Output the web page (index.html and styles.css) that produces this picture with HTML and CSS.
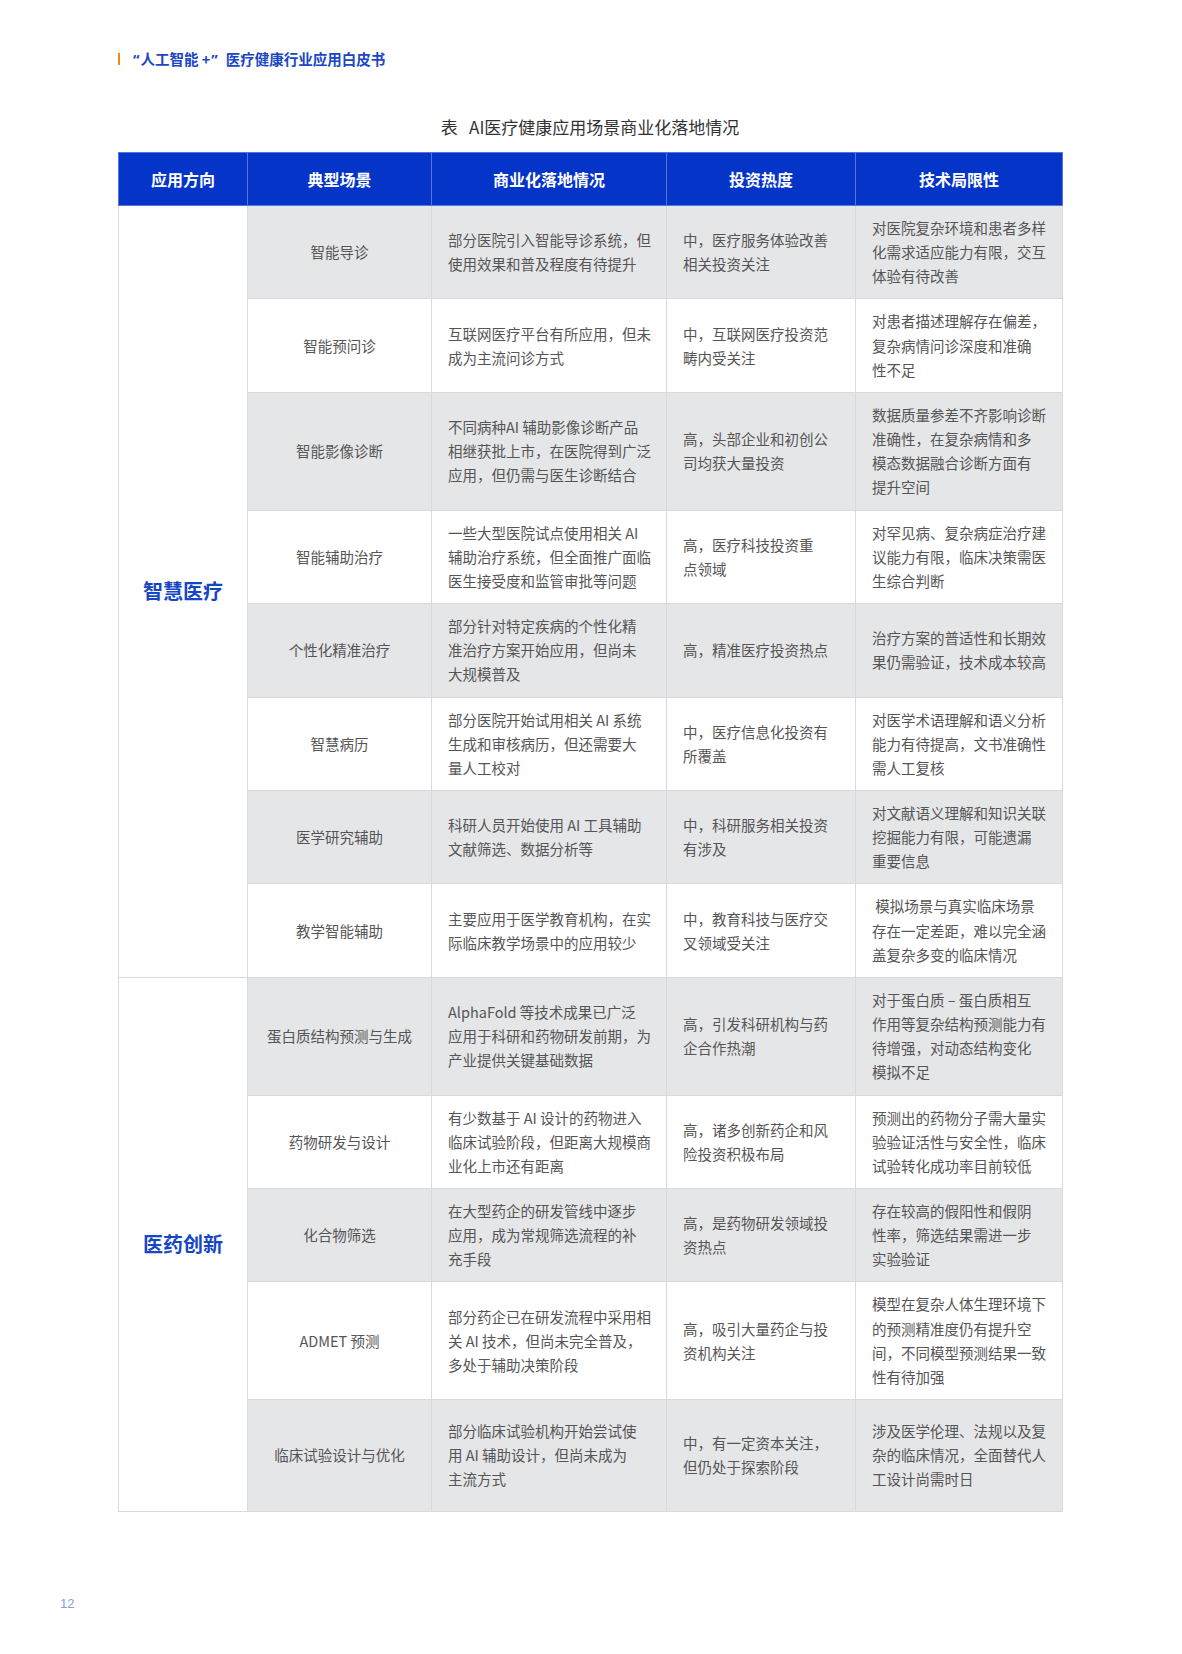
FILE: index.html
```html
<!DOCTYPE html>
<html lang="zh-CN">
<head>
<meta charset="utf-8">
<title>AI医疗健康应用场景商业化落地情况</title>
<link rel="stylesheet" href="styles.css">
</head>
<body>
<div class="page">
  <div class="content">
    <div class="doc-header">
      <span class="doc-bar"></span>
      <span class="doc-title"><span class="q">“</span>人工智能 +<span class="q q-end">”</span>医疗健康行业应用白皮书</span>
    </div>
    <div class="table-title">表&nbsp;&nbsp;&nbsp;AI医疗健康应用场景商业化落地情况</div>
    <table class="grid">
      <colgroup>
        <col class="c1"><col class="c2"><col class="c3"><col class="c4"><col class="c5">
      </colgroup>
      <thead>
        <tr>
          <th>应用方向</th><th>典型场景</th><th>商业化落地情况</th><th>投资热度</th><th>技术局限性</th>
        </tr>
      </thead>
      <tbody>
        <tr class="gray">
          <td class="group" rowspan="8">智慧医疗</td>
          <td class="scene">智能导诊</td>
          <td>部分医院引入智能导诊系统，但<br>使用效果和普及程度有待提升</td>
          <td>中，医疗服务体验改善<br>相关投资关注</td>
          <td>对医院复杂环境和患者多样<br>化需求适应能力有限，交互<br>体验有待改善</td>
        </tr>
        <tr>
          <td class="scene">智能预问诊</td>
          <td>互联网医疗平台有所应用，但未<br>成为主流问诊方式</td>
          <td>中，互联网医疗投资范<br>畴内受关注</td>
          <td>对患者描述理解存在偏差，<br>复杂病情问诊深度和准确<br>性不足</td>
        </tr>
        <tr class="gray">
          <td class="scene">智能影像诊断</td>
          <td>不同病种AI 辅助影像诊断产品<br>相继获批上市，在医院得到广泛<br>应用，但仍需与医生诊断结合</td>
          <td>高，头部企业和初创公<br>司均获大量投资</td>
          <td>数据质量参差不齐影响诊断<br>准确性，在复杂病情和多<br>模态数据融合诊断方面有<br>提升空间</td>
        </tr>
        <tr>
          <td class="scene">智能辅助治疗</td>
          <td>一些大型医院试点使用相关 AI<br>辅助治疗系统，但全面推广面临<br>医生接受度和监管审批等问题</td>
          <td>高，医疗科技投资重<br>点领域</td>
          <td>对罕见病、复杂病症治疗建<br>议能力有限，临床决策需医<br>生综合判断</td>
        </tr>
        <tr class="gray">
          <td class="scene">个性化精准治疗</td>
          <td>部分针对特定疾病的个性化精<br>准治疗方案开始应用，但尚未<br>大规模普及</td>
          <td>高，精准医疗投资热点</td>
          <td>治疗方案的普适性和长期效<br>果仍需验证，技术成本较高</td>
        </tr>
        <tr>
          <td class="scene">智慧病历</td>
          <td>部分医院开始试用相关 AI 系统<br>生成和审核病历，但还需要大<br>量人工校对</td>
          <td>中，医疗信息化投资有<br>所覆盖</td>
          <td>对医学术语理解和语义分析<br>能力有待提高，文书准确性<br>需人工复核</td>
        </tr>
        <tr class="gray">
          <td class="scene">医学研究辅助</td>
          <td>科研人员开始使用 AI 工具辅助<br>文献筛选、数据分析等</td>
          <td>中，科研服务相关投资<br>有涉及</td>
          <td>对文献语义理解和知识关联<br>挖掘能力有限，可能遗漏<br>重要信息</td>
        </tr>
        <tr>
          <td class="scene">教学智能辅助</td>
          <td>主要应用于医学教育机构，在实<br>际临床教学场景中的应用较少</td>
          <td>中，教育科技与医疗交<br>叉领域受关注</td>
          <td>&nbsp;模拟场景与真实临床场景<br>存在一定差距，难以完全涵<br>盖复杂多变的临床情况</td>
        </tr>
        <tr class="gray">
          <td class="group" rowspan="5">医药创新</td>
          <td class="scene">蛋白质结构预测与生成</td>
          <td>AlphaFold 等技术成果已广泛<br>应用于科研和药物研发前期，为<br>产业提供关键基础数据</td>
          <td>高，引发科研机构与药<br>企合作热潮</td>
          <td>对于蛋白质 – 蛋白质相互<br>作用等复杂结构预测能力有<br>待增强，对动态结构变化<br>模拟不足</td>
        </tr>
        <tr>
          <td class="scene">药物研发与设计</td>
          <td>有少数基于 AI 设计的药物进入<br>临床试验阶段，但距离大规模商<br>业化上市还有距离</td>
          <td>高，诸多创新药企和风<br>险投资积极布局</td>
          <td>预测出的药物分子需大量实<br>验验证活性与安全性，临床<br>试验转化成功率目前较低</td>
        </tr>
        <tr class="gray">
          <td class="scene">化合物筛选</td>
          <td>在大型药企的研发管线中逐步<br>应用，成为常规筛选流程的补<br>充手段</td>
          <td>高，是药物研发领域投<br>资热点</td>
          <td>存在较高的假阳性和假阴<br>性率，筛选结果需进一步<br>实验验证</td>
        </tr>
        <tr>
          <td class="scene">ADMET 预测</td>
          <td>部分药企已在研发流程中采用相<br>关 AI 技术，但尚未完全普及，<br>多处于辅助决策阶段</td>
          <td>高，吸引大量药企与投<br>资机构关注</td>
          <td>模型在复杂人体生理环境下<br>的预测精准度仍有提升空<br>间，不同模型预测结果一致<br>性有待加强</td>
        </tr>
        <tr class="gray last">
          <td class="scene">临床试验设计与优化</td>
          <td>部分临床试验机构开始尝试使<br>用 AI 辅助设计，但尚未成为<br>主流方式</td>
          <td>中，有一定资本关注，<br>但仍处于探索阶段</td>
          <td>涉及医学伦理、法规以及复<br>杂的临床情况，全面替代人<br>工设计尚需时日</td>
        </tr>
      </tbody>
    </table>
  </div>
  <div class="page-num">12</div>
</div>
</body>
</html>
```

FILE: styles.css
```css
html, body {
  margin: 0;
  padding: 0;
  background: #ffffff;
}

body {
  font-family: "Noto Sans CJK SC", "Noto Sans", sans-serif;
  color: #555555;
}

.page {
  width: 1182px;
  padding-top: 48px;
}

.content {
  margin-left: 118px;
  width: 944px;
}

.doc-header {
  display: flex;
  align-items: center;
  gap: 13px;
  height: 22px;
}

.doc-bar {
  display: block;
  width: 2px;
  height: 12px;
  background: #f08a1c;
}

.doc-title {
  font-size: 14.5px;
  line-height: 22px;
  font-weight: 700;
  color: #1b46c4;
}

.doc-title .q {
  font-family: "Noto Sans", "Liberation Sans", sans-serif;
  font-weight: 700;
  margin-right: 1px;
}

.doc-title .q-end {
  margin-left: 1px;
  margin-right: 8px;
}

.table-title {
  margin-top: 45px;
  text-align: center;
  font-size: 17px;
  line-height: 24px;
  color: #333333;
}

.grid {
  margin-top: 13px;
  width: 944px;
  table-layout: fixed;
  border-collapse: collapse;
  border: 1px solid #d9dadd;
}

.c1 { width: 129px; }
.c2 { width: 184px; }
.c3 { width: 235px; }
.c4 { width: 189px; }
.c5 { width: 207px; }

.grid th {
  background: #0434c8;
  color: #ffffff;
  font-size: 16px;
  font-weight: 700;
  line-height: 52px;
  padding: 0;
  text-align: center;
  border: 1px solid #5476de;
}

.grid td {
  font-size: 14.5px;
  line-height: 24.15px;
  padding: 10px 15px 10px 16px;
  text-align: left;
  vertical-align: middle;
  border: 1px solid #d8d9dc;
  color: #555555;
  white-space: nowrap;
}

.grid tr.gray td {
  background: #e5e6e8;
}

.grid tr.last td {
  padding-top: 19px;
  padding-bottom: 19px;
}

.grid td.scene {
  text-align: center;
  padding-left: 4px;
  padding-right: 4px;
}

.grid td.group,
.grid tr.gray td.group {
  background: #ffffff;
  text-align: center;
  padding: 0;
  font-size: 20px;
  font-weight: 700;
  color: #1546c4;
}

.page-num {
  margin-top: 83px;
  margin-left: 60px;
  font-family: "Liberation Sans", Arial, sans-serif;
  font-size: 13px;
  line-height: 18px;
  color: #8a9be0;
}
```
